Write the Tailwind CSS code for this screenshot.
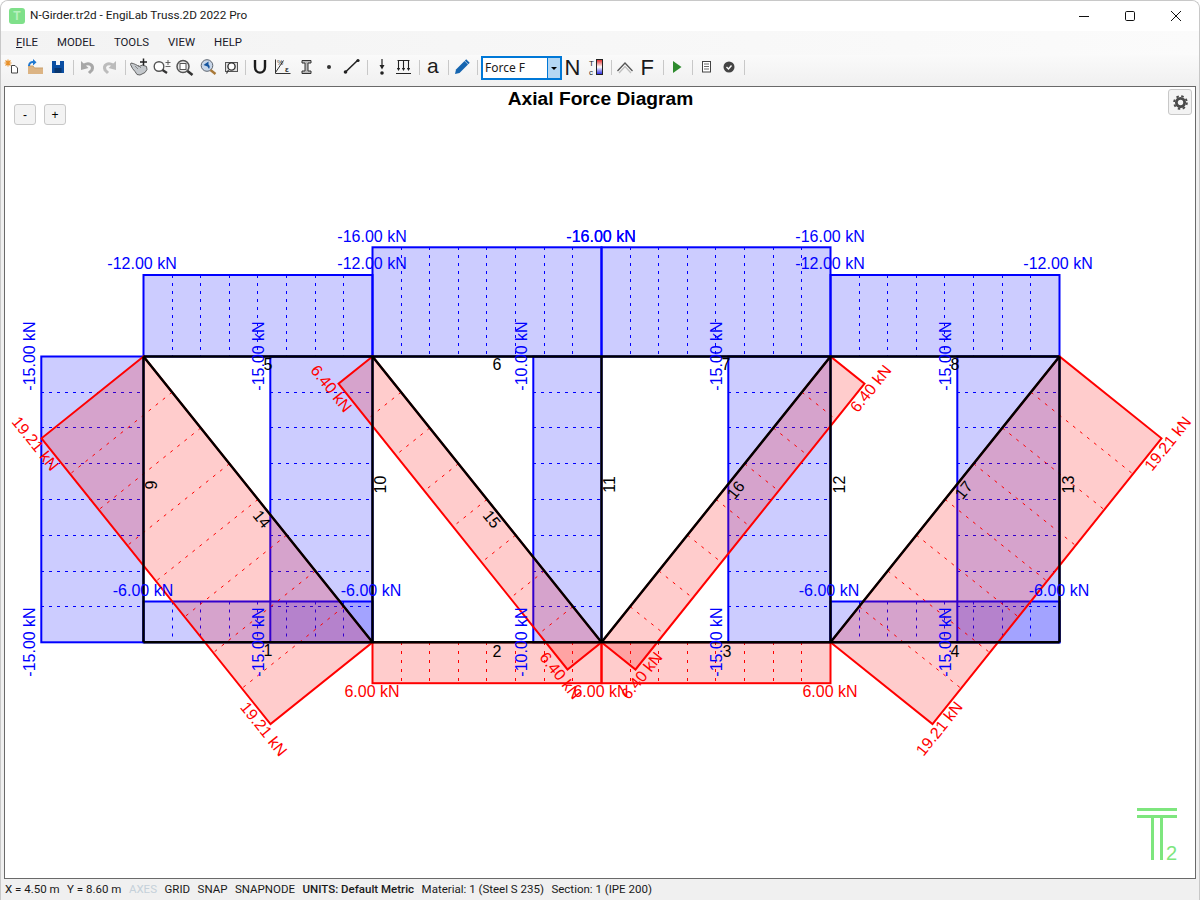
<!DOCTYPE html>
<html lang="en">
<head>
  <meta charset="UTF-8">
  <script src="https://cdn.jsdelivr.net/npm/@tailwindcss/browser@4"></script>
  <title>N-Girder.tr2d - EngiLab Truss.2D 2022 Pro</title>
</head>
<body class="bg-white overflow-hidden">
<div class="w-[1200px] h-[900px] flex flex-col overflow-hidden rounded-t-lg border-x border-t border-[#c8c8c8] bg-[#f0f0f0] font-['Roboto',sans-serif] text-black">

  <!-- title bar -->
  <div class="h-[30px] shrink-0 bg-white flex items-center pl-[8px]">
    <div class="w-[16px] h-[16px] rounded-[3px] bg-[#7fe08a] flex items-center justify-center text-[12px] leading-none font-bold text-[#b8f0bf] font-['Liberation_Sans',sans-serif]">T</div>
    <div class="ml-[5px] text-[11.75px] text-[#1a1a1a]">N-Girder.tr2d - EngiLab Truss.2D 2022 Pro</div>
    <div class="ml-auto flex items-center">
      <svg class="w-[46px] h-[30px]" viewBox="0 0 46 30"><path d="M18 15.500h10" stroke="#111" stroke-width="1"/></svg>
      <svg class="w-[46px] h-[30px]" viewBox="0 0 46 30"><rect x="18.500" y="10.500" width="9" height="9" rx="1.200" fill="none" stroke="#111"/></svg>
      <svg class="w-[46px] h-[30px]" viewBox="0 0 46 30"><path d="M18 10l10 10M28 10l-10 10" stroke="#111" stroke-width="1" fill="none"/></svg>
    </div>
  </div>

  <!-- menu -->
  <div class="h-[24px] shrink-0 bg-gradient-to-r from-[#f3f3f3] to-[#fbfbfb] flex items-center pl-[15px] gap-[19px] text-[11.4px] text-[#1a1a2a]">
    <span><span class="underline">F</span>ILE</span><span>MODEL</span><span>TOOLS</span><span>VIEW</span><span>HELP</span>
  </div>

  <!-- toolbar -->
  <div class="h-[31px] shrink-0 bg-gradient-to-b from-[#fafafa] to-[#f0f0f0] flex items-start">
    <svg class="w-[480px] h-[31px] shrink-0" viewBox="1 55 480 31" font-family="Liberation Sans, sans-serif">
      <!-- new -->
      <path d="M11.500 65.500h3.500l2.500 2.500v5h-6z" fill="#fff" stroke="#444"/>
      <path d="M8 59.500v7M4.500 63h7M5.500 60.500l5 5M10.500 60.500l-5 5" stroke="#e8912a" stroke-width="1.100"/>
      <!-- open -->
      <path d="M28 66h5l1.500 2H43v6H28z" fill="#dcb484"/><path d="M28 66h5l1.500 2H43" fill="none" stroke="#c9a06c"/>
      <path d="M29 66c0-3 2-4.500 5-4" fill="none" stroke="#1f78d1" stroke-width="2"/><path d="M33 59l3.500 3.200L33 65.500z" fill="#1f78d1"/>
      <!-- save -->
      <path d="M52 61h12v12H52z" fill="#0b4fa3"/><rect x="56" y="61" width="4" height="4" fill="#f4f6fa"/><rect x="54.500" y="68" width="7" height="5" fill="#08366f"/>
      <path d="M73.500 60v15" stroke="#c8c8c8"/>
      <!-- undo / redo -->
      <path d="M84 65c5-3 10 0 8 5l-3 3" fill="none" stroke="#a8a8a8" stroke-width="3"/><path d="M81 61v9l7.500-2z" fill="#a8a8a8"/>
      <path d="M113 65c-5-3-10 0-8 5l3 3" fill="none" stroke="#bcbcbc" stroke-width="3"/><path d="M116 61v9l-7.500-2z" fill="#bcbcbc"/>
      <path d="M125.500 60v15" stroke="#c8c8c8"/>
      <!-- pan -->
      <path d="M131 63c3 .5 6 2 8 3.500l3.500-1.500 4 1.500.5 3-2 3-5 2.500-3-.5-2-3-2.500-3-2-4z" fill="#c4c8cc" stroke="#555" stroke-width=".9"/>
      <path d="M135 66l3 3M138 65l3 3" stroke="#777" stroke-width=".8"/>
      <path d="M143.500 58.500v7M140 62h7" stroke="#222" stroke-width="1.500"/>
      <!-- zoom in/out -->
      <circle cx="159" cy="66.500" r="4.800" fill="#fff" stroke="#555" stroke-width="1.400"/><path d="M162.500 70l4.500 3" stroke="#333" stroke-width="2.200"/>
      <path d="M168 60v5M165.500 62.500h5M165.500 66.500h5" stroke="#555" stroke-width=".9"/>
      <!-- zoom window -->
      <circle cx="183" cy="66.500" r="6" fill="#e8e8e8" stroke="#555" stroke-width="1.500"/><rect x="180" y="63.500" width="6" height="6" fill="#fff" stroke="#555"/><path d="M187.500 71l5 4" stroke="#333" stroke-width="2.600"/>
      <!-- zoom previous -->
      <circle cx="207" cy="65.500" r="5.800" fill="#c8d6e8" stroke="#5c6470"/><path d="M203.500 65l5-3.500v3c1.500 1 1.500 3 .5 4.500l-1.500-2.500z" fill="#14549f"/><path d="M210.500 70l5 4" stroke="#a87838" stroke-width="2.500"/>
      <!-- zoom extents -->
      <rect x="225.500" y="62.500" width="12" height="9" fill="#e0e0e0" stroke="#555"/><circle cx="231.500" cy="66.500" r="3.600" fill="#fff" stroke="#333" stroke-width="1.400"/><path d="M228.500 70l-2 3.500" stroke="#333" stroke-width="1.200"/>
      <path d="M245.500 60v15" stroke="#c8c8c8"/>
      <!-- U section -->
      <path d="M255 60v7c0 7.500 10 7.500 10 0v-7" fill="none" stroke="#1c1c1c" stroke-width="2.400"/>
      <!-- material -->
      <path d="M275.500 59.500v14h15M275.500 72.500l8-12" fill="none" stroke="#333"/>
      <text x="277" y="65" font-size="7" fill="#333">%</text><text x="285" y="72" font-size="8" font-weight="700" fill="#333">ε</text>
      <!-- I section -->
      <path d="M302 60.500h9v2.500h-3v8h3v2.500h-9V71h3v-8h-3z" fill="#b8b8b8" stroke="#333"/>
      <!-- node -->
      <circle cx="329" cy="67" r="2" fill="#333"/>
      <!-- element -->
      <path d="M345.500 72l12.500-12" stroke="#222" stroke-width="1.600"/><circle cx="345.500" cy="72" r="1.800" fill="#222"/><circle cx="358" cy="60.500" r="1.600" fill="#222"/>
      <path d="M367.500 60v15" stroke="#c8c8c8"/>
      <!-- nodal load -->
      <path d="M382 59v9" stroke="#222" stroke-width="1.200"/><path d="M379.500 65l2.500 4.500 2.500-4.500z" fill="#222"/><circle cx="382" cy="73" r="1.800" fill="#222"/>
      <!-- distributed load -->
      <path d="M397.500 60.500h12M398.500 60.500v9M403.500 60.500v9M408.500 60.500v9M396 73.500h15" stroke="#222" stroke-width="1.100" fill="none"/>
      <path d="M396.800 68l1.700 3 1.700-3zM401.800 68l1.700 3 1.700-3zM406.800 68l1.700 3 1.700-3z" fill="#222"/>
      <path d="M419.500 60v15" stroke="#c8c8c8"/>
      <!-- labels -->
      <text x="427" y="73" font-size="21" fill="#1c1c1c">a</text>
      <path d="M448.500 60v15" stroke="#c8c8c8"/>
      <!-- pencil -->
      <path d="M455 74l1-4.500 8.500-8.500 3.500 3.500-8.500 8.500z" fill="#1565b0"/><path d="M465.500 60l3.500 3.500" stroke="#1565b0" stroke-width="2"/>
      <path d="M477.500 60v15" stroke="#c8c8c8"/>
    </svg>
    <!-- result combo -->
    <div class="w-[81px] h-[24px] mt-[1px] shrink-0 flex border-2 border-[#0078d7] bg-white text-[12px] leading-[20px] text-[#1a1a1a]">
      <div class="flex-1 pl-[2px] border-r border-[#0078d7] font-['Noto_Sans',sans-serif]">Force F</div>
      <div class="w-[12px] bg-[#b5d7f3] flex items-center justify-center"><div class="w-0 h-0 border-x-[3px] border-t-[3px] border-x-transparent border-t-black"></div></div>
    </div>
    <svg class="w-[200px] h-[31px] shrink-0" viewBox="562 55 200 31" font-family="Liberation Sans, sans-serif">
      <text x="564.500" y="75" font-size="22" fill="#1a1a1a">N</text>
      <!-- colour scale -->
      <text x="589" y="66" font-size="8" fill="#222">T</text><text x="589" y="75" font-size="8" fill="#222">c</text>
      <defs><linearGradient id="scale" x1="0" y1="0" x2="0" y2="1"><stop offset="0" stop-color="#e02020"/><stop offset=".5" stop-color="#ffffff"/><stop offset="1" stop-color="#2020e0"/></linearGradient></defs>
      <rect x="596.500" y="59.500" width="6" height="15" fill="url(#scale)" stroke="#222"/>
      <path d="M611.500 60v15" stroke="#c8c8c8"/>
      <path d="M617.500 71l7.500-8 7.500 8" fill="none" stroke="#555" stroke-width="1.300"/><path d="M619 73l6-6.500 6 6.500" fill="none" stroke="#c0c0c0" stroke-width="1.300"/>
      <text x="640.500" y="75" font-size="22" fill="#1a1a1a">F</text>
      <path d="M663.500 60v15" stroke="#c8c8c8"/>
      <path d="M673 61l8.500 6-8.500 6z" fill="#2e8b2e"/>
      <path d="M692.500 60v15" stroke="#c8c8c8"/>
      <rect x="702.500" y="61.500" width="8" height="10.500" fill="#fff" stroke="#444"/><path d="M704 64h5M704 66.500h5M704 69h5" stroke="#444" stroke-width=".8"/>
      <circle cx="729" cy="67" r="5.500" fill="#444"/><path d="M726.500 67l2 2 3-3.500" fill="none" stroke="#fff" stroke-width="1.400"/>
      <path d="M744.500 60v15" stroke="#c8c8c8"/>
    </svg>
  </div>

  <!-- drawing area -->
  <div class="flex-1 min-h-0 mx-[3px] border border-[#696969] bg-white relative">
    <svg class="block" width="1190" height="791" viewBox="5 87 1190 791" font-family="Liberation Sans, sans-serif" font-size="16">
      <text x="600.500" y="104.500" text-anchor="middle" font-size="19.200" font-weight="700" fill="#000">Axial Force Diagram</text>

      <!-- negative (blue) bands -->
      <g fill="#0000ff" fill-opacity=".2" stroke="#0000ff" stroke-width="2">
        <rect x="143.500" y="275" width="229" height="81.500"/>
        <rect x="372.500" y="247.300" width="229" height="109.200"/>
        <rect x="601.500" y="247.300" width="229" height="109.200"/>
        <rect x="830.500" y="275" width="229" height="81.500"/>
        <rect x="143.500" y="601.500" width="229" height="40.800"/>
        <rect x="830.500" y="601.500" width="229" height="40.800"/>
        <rect x="41.300" y="356.500" width="102.200" height="285.800"/>
        <rect x="270.300" y="356.500" width="102.200" height="285.800"/>
        <rect x="533.300" y="356.500" width="68.200" height="285.800"/>
        <rect x="728.300" y="356.500" width="102.200" height="285.800"/>
        <rect x="957.300" y="356.500" width="102.200" height="285.800"/>
      </g>
      <g fill="none" stroke="#0000ff" stroke-width="1" stroke-dasharray="3 5">
        <path d="M172.500 275V356M200.500 275V356M229.500 275V356M257.500 275V356M286.500 275V356M315.500 275V356M343.500 275V356"/>
        <path d="M401.500 247V356M429.500 247V356M458.500 247V356M486.500 247V356M515.500 247V356M544.500 247V356M572.500 247V356"/>
        <path d="M630.500 247V356M658.500 247V356M687.500 247V356M715.500 247V356M744.500 247V356M773.500 247V356M801.500 247V356"/>
        <path d="M859.500 275V356M887.500 275V356M916.500 275V356M944.500 275V356M973.500 275V356M1002.500 275V356M1030.500 275V356"/>
        <path d="M172.500 601.500V642M200.500 601.500V642M229.500 601.500V642M257.500 601.500V642M286.500 601.500V642M315.500 601.500V642M343.500 601.500V642"/>
        <path d="M859.500 601.500V642M887.500 601.500V642M916.500 601.500V642M944.500 601.500V642M973.500 601.500V642M1002.500 601.500V642M1030.500 601.500V642"/>
        <path d="M41 392.500h102M41 427.500h102M41 463.500h102M41 499.500h102M41 535.500h102M41 571.500h102M41 606.500h102"/>
        <path d="M270 392.500h102M270 427.500h102M270 463.500h102M270 499.500h102M270 535.500h102M270 571.500h102M270 606.500h102"/>
        <path d="M533 392.500h68M533 427.500h68M533 463.500h68M533 499.500h68M533 535.500h68M533 571.500h68M533 606.500h68"/>
        <path d="M728 392.500h102M728 427.500h102M728 463.500h102M728 499.500h102M728 535.500h102M728 571.500h102M728 606.500h102"/>
        <path d="M957 392.500h102M957 427.500h102M957 463.500h102M957 499.500h102M957 535.500h102M957 571.500h102M957 606.500h102"/>
      </g>

      <!-- positive (red) bands -->
      <g fill="#ff0000" fill-opacity=".2" stroke="#ff0000" stroke-width="2">
        <rect x="372.500" y="642.300" width="229" height="40.900"/>
        <rect x="601.500" y="642.300" width="229" height="40.900"/>
        <path d="M143.500 356.500L41.500 438.300L270.500 724.100L372.500 642.300Z"/>
        <path d="M372.500 356.500L338.500 383.700L567.500 669.500L601.500 642.300Z"/>
        <path d="M601.500 642.300L635.500 669.500L864.500 383.700L830.500 356.500Z"/>
        <path d="M830.500 642.300L932.500 724.100L1161.500 438.300L1059.500 356.500Z"/>
      </g>
      <g fill="none" stroke="#ff0000" stroke-width="1" stroke-dasharray="3 6">
        <path d="M401.500 642V683M429.500 642V683M458.500 642V683M486.500 642V683M515.500 642V683M544.500 642V683M572.500 642V683"/>
        <path d="M630.500 642V683M658.500 642V683M687.500 642V683M715.500 642V683M744.500 642V683M773.500 642V683M801.500 642V683"/>
        <path d="M172.100 392.200l-102 81.800M200.800 427.900l-102 81.800M229.400 463.700l-102 81.800M258 499.400l-102 81.800M286.600 535.100l-102 81.800M315.300 570.900l-102 81.800M343.900 606.600l-102 81.800"/>
        <path d="M401.100 392.200l-34 27.200M429.800 427.900l-34 27.200M458.400 463.700l-34 27.200M487 499.400l-34 27.200M515.600 535.100l-34 27.200M544.300 570.900l-34 27.200M572.900 606.600l-34 27.200"/>
        <path d="M630.100 606.600l34 27.200M658.800 570.900l34 27.200M687.400 535.100l34 27.200M716 499.400l34 27.200M744.600 463.700l34 27.200M773.300 427.900l34 27.200M801.900 392.200l34 27.200"/>
        <path d="M859.100 606.600l102 81.800M887.800 570.900l102 81.800M916.400 535.100l102 81.800M945 499.400l102 81.800M973.600 463.700l102 81.800M1002.300 427.900l102 81.800M1030.900 392.200l102 81.800"/>
      </g>

      <!-- truss -->
      <g fill="none" stroke="#000" stroke-width="2.400">
        <path d="M143.500 356.500H1059.500M143.500 642.300H1059.500"/>
        <path d="M143.500 356.500V642.300M372.500 356.500V642.300M601.500 356.500V642.300M830.500 356.500V642.300M1059.500 356.500V642.300"/>
        <path d="M143.500 356.500L372.500 642.300M372.500 356.500L601.500 642.300M601.500 642.300L830.500 356.500M830.500 642.300L1059.500 356.500"/>
      </g>

      <!-- element numbers -->
      <g fill="#000" text-anchor="middle">
        <text x="268" y="656">1</text><text x="497" y="656.500">2</text><text x="727" y="656.500">3</text><text x="955" y="656.500">4</text>
        <text x="268" y="370">5</text><text x="497" y="370">6</text><text x="726" y="370">7</text><text x="955" y="370">8</text>
        <text transform="translate(157 485) rotate(-90)">9</text>
        <text transform="translate(386 484.500) rotate(-90)">10</text>
        <text transform="translate(615 484.500) rotate(-90)">11</text>
        <text transform="translate(845 484.500) rotate(-90)">12</text>
        <text transform="translate(1074 484.500) rotate(-90)">13</text>
        <text transform="translate(262 519) rotate(51.300) translate(0 5.700)">14</text>
        <text transform="translate(492 519) rotate(51.300) translate(0 5.700)">15</text>
        <text transform="translate(735.500 490) rotate(-51.300) translate(0 5.700)">16</text>
        <text transform="translate(963.500 490) rotate(-51.300) translate(0 5.700)">17</text>
      </g>

      <!-- force labels -->
      <g fill="#0000ff" text-anchor="middle">
        <text x="142" y="269">-12.00 kN</text><text x="372" y="269">-12.00 kN</text><text x="830" y="269">-12.00 kN</text><text x="1058" y="269">-12.00 kN</text>
        <text x="372" y="241.500">-16.00 kN</text><text x="601" y="241.500">-16.00 kN</text><text x="601" y="241.500">-16.00 kN</text><text x="830" y="241.500">-16.00 kN</text>
        <text x="143" y="596">-6.00 kN</text><text x="371" y="596">-6.00 kN</text><text x="829" y="596">-6.00 kN</text><text x="1059" y="596">-6.00 kN</text>
        <text transform="translate(35 356) rotate(-90)">-15.00 kN</text><text transform="translate(35 642) rotate(-90)">-15.00 kN</text>
        <text transform="translate(264 356) rotate(-90)">-15.00 kN</text><text transform="translate(264 642) rotate(-90)">-15.00 kN</text>
        <text transform="translate(527 356) rotate(-90)">-10.00 kN</text><text transform="translate(527 642) rotate(-90)">-10.00 kN</text>
        <text transform="translate(722 356) rotate(-90)">-15.00 kN</text><text transform="translate(722 642) rotate(-90)">-15.00 kN</text>
        <text transform="translate(951 356) rotate(-90)">-15.00 kN</text><text transform="translate(951 642) rotate(-90)">-15.00 kN</text>
      </g>
      <g fill="#ff0000" text-anchor="middle">
        <text x="372" y="697">6.00 kN</text><text x="601" y="697">6.00 kN</text><text x="830" y="697">6.00 kN</text>
        <text transform="translate(31 447) rotate(51.300)">19.21 kN</text>
        <text transform="translate(259.500 732.500) rotate(51.300)">19.21 kN</text>
        <text transform="translate(327 392) rotate(51.300)">6.40 kN</text>
        <text transform="translate(556 679) rotate(51.300)">6.40 kN</text>
        <text transform="translate(646 679) rotate(-51.300)">6.40 kN</text>
        <text transform="translate(875 392) rotate(-51.300)">6.40 kN</text>
        <text transform="translate(943.500 732) rotate(-51.300)">19.21 kN</text>
        <text transform="translate(1172 447) rotate(-51.300)">19.21 kN</text>
      </g>

      <!-- T2 logo -->
      <path d="M1137 808h40v3h-40zM1137 815h40v3h-40zM1151 818h3v42h-3zM1160 818h3v42h-3z" fill="#7ee67e"/>
      <text x="1166" y="860" font-size="20" fill="#7ee67e">2</text>
    </svg>

    <!-- zoom buttons -->
    <button class="absolute left-[9px] top-[17px] w-[22px] h-[21px] bg-[#f3f3f3] border border-[#c8c8c8] rounded-[3px] text-[12px] leading-none font-['Liberation_Sans',sans-serif]">-</button>
    <button class="absolute left-[39px] top-[17px] w-[22px] h-[21px] bg-[#f3f3f3] border border-[#c8c8c8] rounded-[3px] text-[12px] leading-none font-['Liberation_Sans',sans-serif]">+</button>
    <!-- settings -->
    <button class="absolute left-[1163px] top-[2px] w-[24px] h-[26px] bg-[#f3f3f3] border border-[#c8c8c8] rounded-[3px] flex items-center justify-center">
      <svg class="w-[15px] h-[15px]" viewBox="0 0 16 16"><circle cx="8" cy="8" r="4.400" fill="none" stroke="#4a4a4a" stroke-width="3"/><circle cx="8" cy="8" r="6.800" fill="none" stroke="#4a4a4a" stroke-width="2" stroke-dasharray="2.670 2.670"/></svg>
    </button>
  </div>

  <!-- status bar -->
  <div class="h-[21px] shrink-0 flex items-center pl-[4px] gap-[7.500px] text-[11.500px] text-[#1a1a1a]">
    <span>X = 4.50 m</span><span>Y = 8.60 m</span><span class="text-[#c5d0da]">AXES</span><span>GRID</span><span>SNAP</span><span>SNAPNODE</span><span class="font-medium">UNITS: Default Metric</span><span>Material: 1 (Steel S 235)</span><span>Section: 1 (IPE 200)</span>
  </div>
</div>
</body>
</html>
